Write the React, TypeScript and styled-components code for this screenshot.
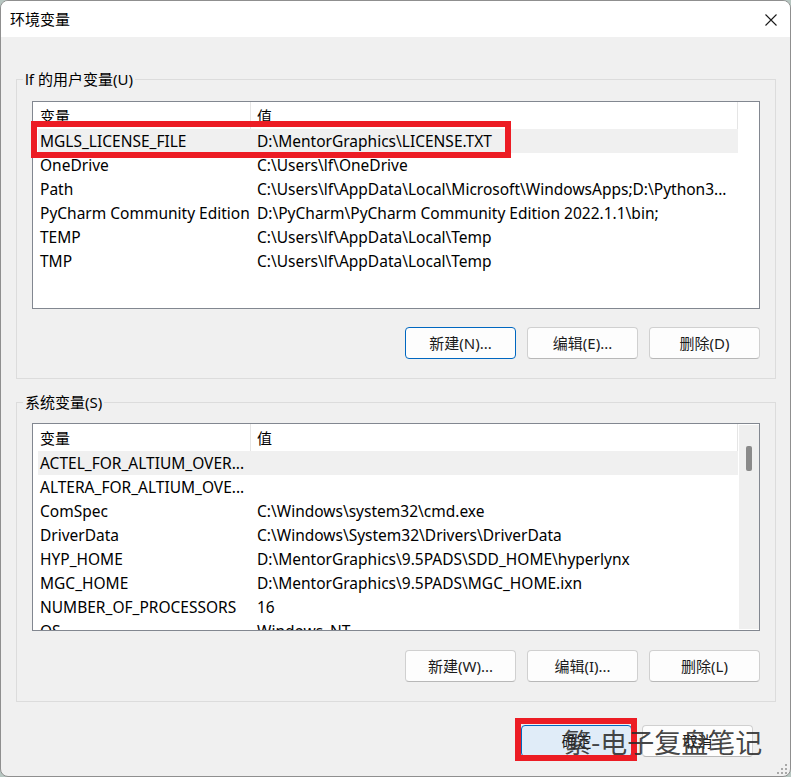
import React from "react";
import styled, { createGlobalStyle } from "styled-components";

const GlobalStyle = createGlobalStyle`
  html, body {
    margin: 0;
    padding: 0;
    background: #b7c6c1;
  }
  body {
    font-family: "Noto Sans", "Noto Sans CJK SC", sans-serif;
    font-size: 15px;
    color: #000;
  }
  * { box-sizing: border-box; }
`;

const Window = styled.div`
  position: relative;
  width: 791px;
  height: 777px;
  border: 1px solid #8f8f8f;
  border-radius: 8px;
  background: #f0f0f0;
  overflow: hidden;
  display: flex;
  flex-direction: column;
`;

const TitleBar = styled.div`
  height: 36px;
  flex: none;
  background: #ffffff;
  display: flex;
  align-items: center;
  justify-content: space-between;
  padding: 0 13px 0 9px;
`;

const Title = styled.div`
  font-size: 15px;
  line-height: 20px;
  color: #000;
`;

const CloseButton = styled.div`
  width: 12px;
  height: 12px;
  display: flex;
  margin-top: 1px;
`;

const Content = styled.div`
  flex: 1;
  display: flex;
  flex-direction: column;
  padding: 0 14px 0 15px;
`;

const Group = styled.fieldset<{ $top: number; $padTop: number }>`
  margin: ${(p) => p.$top}px 0 0 0;
  min-width: 0;
  border: 1px solid #dcdcdc;
  padding: ${(p) => p.$padTop}px 15px 19px 15px;
`;

const Legend = styled.legend`
  margin-left: -9px;
  padding: 0 2px;
  font-size: 15px;
  line-height: 20px;
  color: #000;
`;

const ListWrap = styled.div`
  position: relative;
`;

const List = styled.div`
  height: 208px;
  border: 1px solid #828790;
  background: #ffffff;
  display: flex;
  overflow: hidden;
  font-size: 15.5px;
`;

const TableArea = styled.div`
  width: 705px;
  flex: none;
  display: flex;
  flex-direction: column;
`;

const HeaderRow = styled.div`
  display: grid;
  grid-template-columns: 218px 487px;
  height: 27px;
  flex: none;
`;

const HeaderCell = styled.div<{ $pad: number }>`
  border-right: 1px solid #e5e5e5;
  padding: 2px 0 0 ${(p) => p.$pad}px;
  line-height: 25px;
  font-size: 15px;
  white-space: nowrap;
  overflow: hidden;
`;

const Row = styled.div<{ $selected?: boolean }>`
  display: grid;
  grid-template-columns: 213px 487px;
  margin-left: 5px;
  height: 24px;
  flex: none;
  background: ${(p) => (p.$selected ? "#f0f0f0" : "transparent")};
`;

const Cell = styled.div<{ $pad: number }>`
  padding-left: ${(p) => p.$pad}px;
  line-height: 24px;
  white-space: nowrap;
  overflow: hidden;
`;

const ScrollTrack = styled.div`
  width: 20px;
  flex: none;
  margin: 1px 0 1px 1px;
  background: #efefef;
  display: flex;
  flex-direction: column;
  align-items: center;
`;

const ScrollThumb = styled.div`
  width: 6px;
  height: 25px;
  margin-top: 21px;
  border-radius: 2px;
  background: #8a8a8a;
`;

const ButtonRow = styled.div<{ $top: number; $gap: number; $right?: number }>`
  display: flex;
  justify-content: flex-end;
  gap: ${(p) => p.$gap}px;
  margin-top: ${(p) => p.$top}px;
  margin-right: ${(p) => p.$right ?? 0}px;
`;

const Button = styled.button<{ $focus?: boolean; $accent?: boolean }>`
  width: 111px;
  height: 32px;
  border-radius: 4px;
  border: 1px solid ${(p) => (p.$focus || p.$accent ? "#0067c0" : "#d0d0d0")};
  border-bottom-color: ${(p) => (p.$focus || p.$accent ? "#0067c0" : "#b8b8b8")};
  background: ${(p) => (p.$accent ? "#e0ecf8" : "#fdfdfd")};
  font-family: "Noto Sans", "Noto Sans CJK SC", sans-serif;
  font-size: 15px;
  color: #1b1b1b;
  padding: 0 0 1px 0;
  display: flex;
  align-items: center;
  justify-content: center;
`;

const ButtonWrap = styled.div`
  position: relative;
  display: flex;
`;

const RedMark = styled.div<{ $l: number; $t: number; $w: number; $h: number }>`
  position: absolute;
  left: ${(p) => p.$l}px;
  top: ${(p) => p.$t}px;
  width: ${(p) => p.$w}px;
  height: ${(p) => p.$h}px;
  border: 6px solid #ec1c24;
  pointer-events: none;
`;

const Watermark = styled.div`
  position: absolute;
  left: 563px;
  top: 725px;
  font-family: "Noto Sans CJK SC", "Noto Sans", sans-serif;
  font-size: 27px;
  line-height: 32px;
  color: rgba(45, 45, 45, 0.88);
  white-space: nowrap;
  pointer-events: none;
`;

const Grip = styled.div`
  position: absolute;
  right: 2px;
  bottom: 1px;
  width: 11px;
  height: 11px;
  display: flex;
`;

type Item = [string, string];

const userVars: Item[] = [
  ["MGLS_LICENSE_FILE", "D:\\MentorGraphics\\LICENSE.TXT"],
  ["OneDrive", "C:\\Users\\lf\\OneDrive"],
  ["Path", "C:\\Users\\lf\\AppData\\Local\\Microsoft\\WindowsApps;D:\\Python3..."],
  ["PyCharm Community Edition", "D:\\PyCharm\\PyCharm Community Edition 2022.1.1\\bin;"],
  ["TEMP", "C:\\Users\\lf\\AppData\\Local\\Temp"],
  ["TMP", "C:\\Users\\lf\\AppData\\Local\\Temp"],
];

const sysVars: Item[] = [
  ["ACTEL_FOR_ALTIUM_OVER...", ""],
  ["ALTERA_FOR_ALTIUM_OVE...", ""],
  ["ComSpec", "C:\\Windows\\system32\\cmd.exe"],
  ["DriverData", "C:\\Windows\\System32\\Drivers\\DriverData"],
  ["HYP_HOME", "D:\\MentorGraphics\\9.5PADS\\SDD_HOME\\hyperlynx"],
  ["MGC_HOME", "D:\\MentorGraphics\\9.5PADS\\MGC_HOME.ixn"],
  ["NUMBER_OF_PROCESSORS", "16"],
  ["OS", "Windows_NT"],
];

function VarTable({ items, scroll }: { items: Item[]; scroll?: boolean }) {
  return (
    <List>
      <TableArea>
        <HeaderRow>
          <HeaderCell $pad={7}>变量</HeaderCell>
          <HeaderCell $pad={6}>值</HeaderCell>
        </HeaderRow>
        {items.map(([k, v], i) => (
          <Row key={k} $selected={i === 0}>
            <Cell $pad={2}>{k}</Cell>
            <Cell $pad={6}>{v}</Cell>
          </Row>
        ))}
      </TableArea>
      {scroll && (
        <ScrollTrack>
          <ScrollThumb />
        </ScrollTrack>
      )}
    </List>
  );
}

export default function App() {
  return (
    <>
      <GlobalStyle />
      <Window>
        <TitleBar>
          <Title>环境变量</Title>
          <CloseButton>
            <svg width="12" height="12" viewBox="0 0 12 12">
              <path d="M0.5 0.5 L11.5 11.5 M11.5 0.5 L0.5 11.5" stroke="#1a1a1a" strokeWidth="1.1" fill="none" />
            </svg>
          </CloseButton>
        </TitleBar>
        <Content>
          <Group $top={32} $padTop={12}>
            <Legend>lf 的用户变量(U)</Legend>
            <ListWrap>
              <VarTable items={userVars} />
              <RedMark $l={-1} $t={20} $w={480} $h={37} />
            </ListWrap>
            <ButtonRow $top={18} $gap={11}>
              <Button $focus>新建(N)...</Button>
              <Button>编辑(E)...</Button>
              <Button>删除(D)</Button>
            </ButtonRow>
          </Group>
          <Group $top={13} $padTop={11}>
            <Legend>系统变量(S)</Legend>
            <ListWrap>
              <VarTable items={sysVars} scroll />
            </ListWrap>
            <ButtonRow $top={19} $gap={11}>
              <Button>新建(W)...</Button>
              <Button>编辑(I)...</Button>
              <Button>删除(L)</Button>
            </ButtonRow>
          </Group>
          <ButtonRow $top={23} $gap={10} $right={23}>
            <ButtonWrap>
              <Button $accent>确定</Button>
              <RedMark $l={-6} $t={-7} $w={122} $h={43} />
            </ButtonWrap>
            <Button>取消</Button>
          </ButtonRow>
        </Content>
        <Watermark>繁-电子复盘笔记</Watermark>
        <Grip>
          <svg width="11" height="11" viewBox="0 0 11 11" fill="#a8a8a8">
            <rect x="8" y="0" width="2" height="2" />
            <rect x="4" y="4" width="2" height="2" />
            <rect x="8" y="4" width="2" height="2" />
            <rect x="0" y="8" width="2" height="2" />
            <rect x="4" y="8" width="2" height="2" />
            <rect x="8" y="8" width="2" height="2" />
          </svg>
        </Grip>
      </Window>
    </>
  );
}
